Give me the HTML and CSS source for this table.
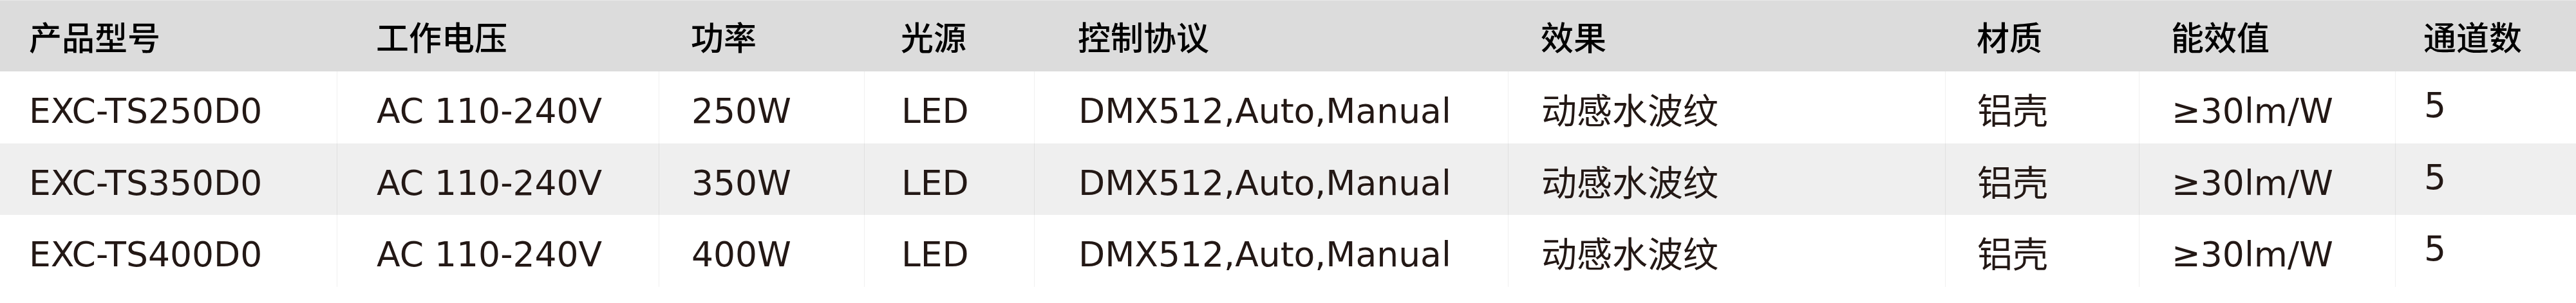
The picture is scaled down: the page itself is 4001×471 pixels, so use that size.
FILE: index.html
```html
<!DOCTYPE html>
<html lang="zh-CN">
<head>
  <meta charset="UTF-8">
  <title>产品参数</title>
  <link rel="stylesheet" href="styles.css">
</head>
<body>
  <div class="spec">
    <div class="row head">
      <div>产品型号</div>
      <div>工作电压</div>
      <div>功率</div>
      <div>光源</div>
      <div>控制协议</div>
      <div>效果</div>
      <div>材质</div>
      <div>能效值</div>
      <div>通道数</div>
    </div>
    <div class="row">
      <div>EXC-TS250D0</div>
      <div>AC 110-240V</div>
      <div>250W</div>
      <div>LED</div>
      <div>DMX512,Auto,Manual</div>
      <div class="cn">动感水波纹</div>
      <div class="cn">铝壳</div>
      <div>≥30lm/W</div>
      <div class="num">5</div>
    </div>
    <div class="row alt">
      <div>EXC-TS350D0</div>
      <div>AC 110-240V</div>
      <div>350W</div>
      <div>LED</div>
      <div>DMX512,Auto,Manual</div>
      <div class="cn">动感水波纹</div>
      <div class="cn">铝壳</div>
      <div>≥30lm/W</div>
      <div class="num">5</div>
    </div>
    <div class="row">
      <div>EXC-TS400D0</div>
      <div>AC 110-240V</div>
      <div>400W</div>
      <div>LED</div>
      <div>DMX512,Auto,Manual</div>
      <div class="cn">动感水波纹</div>
      <div class="cn">铝壳</div>
      <div>≥30lm/W</div>
      <div class="num">5</div>
    </div>
  </div>
</body>
</html>
```
FILE: styles.css
```css
body {
  margin: 0;
  background: #fff;
}

.spec {
  font-family: "DejaVu Sans", "Noto Sans CJK SC", sans-serif;
  color: #231815;
  white-space: nowrap;
}

.row {
  display: grid;
  grid-template-columns: 523px 500px 319px 264px 736px 679px 301px 398px 1fr;
  height: 111.5px;
}

.row > div {
  box-sizing: border-box;
  font-size: 53.5px;
  line-height: 64px;
  padding-top: 30px;
  border-left: 1px solid rgba(0, 0, 0, 0.06);
}

.row > div:first-child {
  border-left: none;
}

/* 表头 */
.row.head {
  height: 111px;
  box-sizing: border-box;
  background: #dcdcdc;
  border-top: 1px solid #e8e8e8;
}

.row.head > div {
  font-family: "Noto Sans CJK SC", sans-serif;
  font-size: 51px;
  font-weight: 500;
  line-height: 61px;
  padding-top: 25px;
  color: #000;
  border-left: none;
}

.row.alt {
  background: #efefef;
}

.row > .cn {
  font-family: "Noto Sans CJK SC", sans-serif;
  font-size: 55px;
  line-height: 66px;
  padding-top: 24px;
}

.row > .num {
  padding-top: 21px;
}

/* 每列文字的缩进 */
.row > :nth-child(1) { padding-left: 45px; }
.row > :nth-child(2) { padding-left: 61px; }
.row > :nth-child(3) { padding-left: 50px; }
.row > :nth-child(4) { padding-left: 57px; }
.row > :nth-child(5) { padding-left: 68px; }
.row > :nth-child(6) { padding-left: 51px; }
.row > :nth-child(7) { padding-left: 49px; }
.row > :nth-child(8) { padding-left: 50px; }
.row > :nth-child(9) { padding-left: 44px; }
```
